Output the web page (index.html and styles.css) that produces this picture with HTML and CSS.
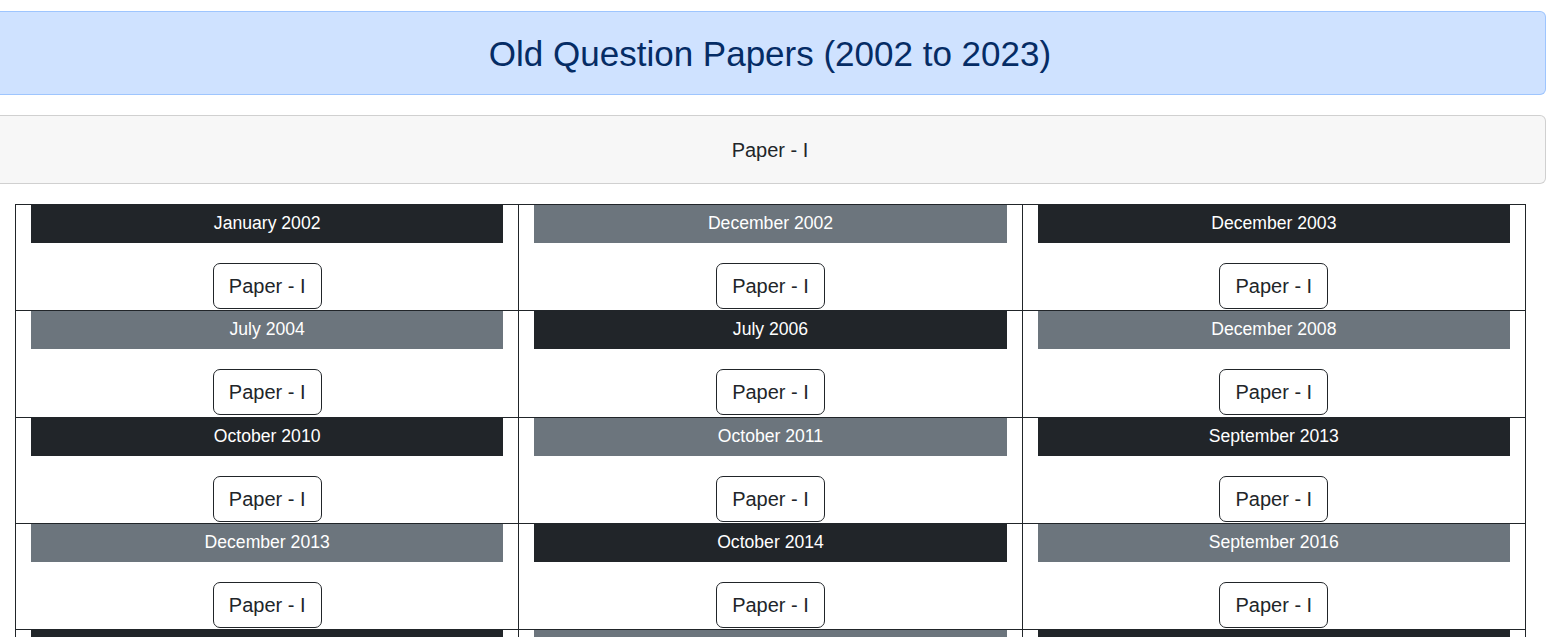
FILE: index.html
```html
<!DOCTYPE html>
<html lang="en">
<head>
    <meta charset="UTF-8">
    <meta name="viewport" content="width=device-width, initial-scale=1.0">
    <title>Old Question Papers</title>
    <link rel="stylesheet" href="styles.css">
</head>
<body>
    <header class="page-header">
        <h1>Old Question Papers (2002 to 2023)</h1>
    </header>

    <div class="paper-tab">Paper - I</div>

    <table class="papers">
        <tr>
            <td><div class="session dark">January 2002</div><div class="links"><a href="#" class="paper-btn">Paper - I</a></div></td>
            <td><div class="session gray">December 2002</div><div class="links"><a href="#" class="paper-btn">Paper - I</a></div></td>
            <td><div class="session dark">December 2003</div><div class="links"><a href="#" class="paper-btn">Paper - I</a></div></td>
        </tr>
        <tr>
            <td><div class="session gray">July 2004</div><div class="links"><a href="#" class="paper-btn">Paper - I</a></div></td>
            <td><div class="session dark">July 2006</div><div class="links"><a href="#" class="paper-btn">Paper - I</a></div></td>
            <td><div class="session gray">December 2008</div><div class="links"><a href="#" class="paper-btn">Paper - I</a></div></td>
        </tr>
        <tr>
            <td><div class="session dark">October 2010</div><div class="links"><a href="#" class="paper-btn">Paper - I</a></div></td>
            <td><div class="session gray">October 2011</div><div class="links"><a href="#" class="paper-btn">Paper - I</a></div></td>
            <td><div class="session dark">September 2013</div><div class="links"><a href="#" class="paper-btn">Paper - I</a></div></td>
        </tr>
        <tr>
            <td><div class="session gray">December 2013</div><div class="links"><a href="#" class="paper-btn">Paper - I</a></div></td>
            <td><div class="session dark">October 2014</div><div class="links"><a href="#" class="paper-btn">Paper - I</a></div></td>
            <td><div class="session gray">September 2016</div><div class="links"><a href="#" class="paper-btn">Paper - I</a></div></td>
        </tr>
        <tr>
            <td><div class="session dark">October 2017</div><div class="links"><a href="#" class="paper-btn">Paper - I</a></div></td>
            <td><div class="session gray">December 2019</div><div class="links"><a href="#" class="paper-btn">Paper - I</a></div></td>
            <td><div class="session dark">February 2023</div><div class="links"><a href="#" class="paper-btn">Paper - I</a></div></td>
        </tr>
    </table>
</body>
</html>
```

FILE: styles.css
```css
* {
    margin: 0;
    padding: 0;
    box-sizing: border-box;
}

body {
    font-family: 'Liberation Sans', Arial, Helvetica, sans-serif;
    color: #212529;
    background: #fff;
    overflow: hidden;
}

.page-header {
    margin: 11px 0 20px -5px;
    padding: 21px 0 20px;
    background: #cfe2ff;
    border: 1px solid #9ec5fe;
    border-left: none;
    border-radius: 0 6px 6px 0;
    text-align: center;
}

.page-header h1 {
    font-size: 35px;
    font-weight: 400;
    line-height: 41px;
    color: #052c65;
}

.paper-tab {
    margin: 0 0 20px -5px;
    padding: 19px 0 18px;
    background: #f7f7f7;
    border: 1px solid #d0d0d0;
    border-left: none;
    border-radius: 0 6px 6px 0;
    text-align: center;
    font-size: 20px;
    line-height: 30px;
}

.papers {
    margin-left: 15px;
    width: 1511px;
    border-collapse: collapse;
    table-layout: fixed;
}

.papers td {
    border: 1px solid #212529;
    padding: 0 15px;
    vertical-align: top;
    height: 106.33px;
}

.session {
    height: 38px;
    line-height: 36px;
    text-align: center;
    color: #fff;
    font-size: 17.6px;
}

.session.dark {
    background: #212529;
}

.session.gray {
    background: #6c757d;
}

.links {
    padding-top: 20px;
    text-align: center;
}

.paper-btn {
    display: inline-block;
    padding: 7px 15px;
    font-size: 20px;
    line-height: 30px;
    color: #212529;
    text-decoration: none;
    border: 1px solid #212529;
    border-radius: 7px;
}
```
